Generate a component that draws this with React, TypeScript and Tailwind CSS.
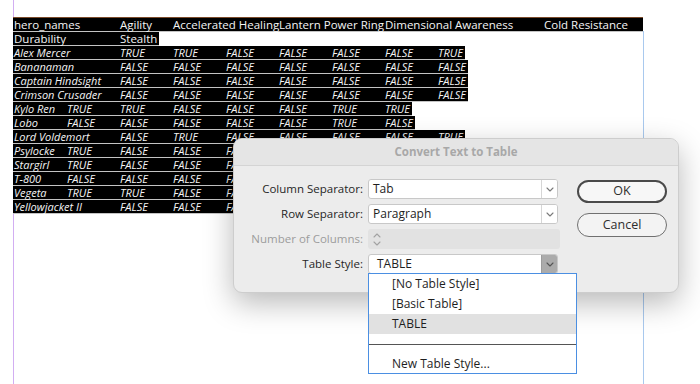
import React from "react";

type Row = [string, boolean, string[], boolean];

const T = "TRUE";
const F = "FALSE";

const rows: Row[] = [
  ["Alex Mercer", true, [T, T, F, F, F, F, T], false],
  ["Bananaman", true, [F, F, F, F, F, F, F], false],
  ["Captain Hindsight", true, [F, F, F, F, F, F, F], false],
  ["Crimson Crusader", true, [F, F, F, F, F, F, F], false],
  ["Kylo Ren", false, [T, T, F, F, F, T, T], false],
  ["Lobo", false, [F, F, F, F, F, T, F], false],
  ["Lord Voldemort", true, [F, T, F, F, F, F, T], false],
  ["Psylocke", false, [T, F, F, F], true],
  ["Stargirl", false, [T, F, F, F], true],
  ["T-800", false, [F, F, F, F], true],
  ["Vegeta", false, [T, T, F, F], true],
  ["Yellowjacket II", true, [F, F, F], true],
];

const tableFont = { fontFamily: '"Open Sans", "Noto Sans", sans-serif' };

function Chevron({ color = "#7a7a7a" }: { color?: string }) {
  return (
    <svg width="8" height="5" viewBox="0 0 8 5">
      <polyline points="1,1 4,4 7,1" fill="none" stroke={color} strokeWidth="1.1" strokeLinecap="round" strokeLinejoin="round" />
    </svg>
  );
}

function Select({ value, pressed = false, textPad = "pl-[4px]" }: { value: string; pressed?: boolean; textPad?: string }) {
  return (
    <div className="ml-[5px] flex h-[20px] w-[190px] overflow-hidden rounded-[3px] border border-[#c8c8c8] bg-white">
      <div className={"flex flex-1 items-center text-[12px] text-[#1e1e1e] " + textPad}>{value}</div>
      <div
        className={
          pressed
            ? "flex w-[16px] items-center justify-center border-l border-[#9c9c9c] bg-[#ababab]"
            : "flex w-[16px] items-center justify-center border-l border-[#d6d6d6] bg-white"
        }
      >
        <Chevron color={pressed ? "#555" : "#7a7a7a"} />
      </div>
    </div>
  );
}

export default function App() {
  return (
    <div className="relative h-[384px] w-[700px] overflow-hidden bg-white">
      {/* guides */}
      <div className="absolute left-[13px] top-0 h-[384px] w-[1px] bg-[#d2aef2]" />
      <div className="absolute left-[643px] top-[31px] h-[353px] w-[1px] bg-[#a9c9ee]" />

      {/* text frame */}
      <div className="absolute left-[13px] top-[17px] w-[630px]" style={tableFont}>
        <div className="flex h-[15px] items-center border-t border-b border-t-[#7b4a2a] border-b-[#c4c4c4] bg-black pl-[1px] text-[11.5px] font-medium leading-[13px] text-[#f4f4f4]">
          <span className="w-[106px] shrink-0">hero_names</span>
          <span className="w-[53px] shrink-0">Agility</span>
          <span className="w-[106px] shrink-0 whitespace-nowrap">Accelerated Healing</span>
          <span className="w-[106px] shrink-0 whitespace-nowrap">Lantern Power Ring</span>
          <span className="w-[159px] shrink-0 whitespace-nowrap">Dimensional Awareness</span>
          <span className="shrink-0 whitespace-nowrap">Cold Resistance</span>
        </div>
        <div className="flex">
          <div className="flex h-[14px] items-center border-b border-[#c4c4c4] bg-black pl-[1px] pr-[2px] text-[11.5px] font-medium leading-[13px] text-[#f4f4f4]">
            <span className="w-[106px] shrink-0">Durability</span>
            <span className="shrink-0">Stealth</span>
          </div>
        </div>
        {rows.map(([name, wide, vals, hidden]) => (
          <div key={name} className="flex">
            <div
              className={
                hidden
                  ? "flex h-[14px] w-[455px] items-center border-b border-[#c4c4c4] bg-black pl-[1px] text-[11px] italic leading-[13px] text-[#f4f4f4]"
                  : "flex h-[14px] items-center border-b border-[#c4c4c4] bg-black pl-[1px] pr-[2px] text-[11px] italic leading-[13px] text-[#f4f4f4]"
              }
            >
              <span className={wide ? "w-[106px] shrink-0 whitespace-nowrap" : "w-[53px] shrink-0 whitespace-nowrap"}>{name}</span>
              {vals.map((v, i) => (
                <span key={i} className={i < vals.length - 1 ? "w-[53px] shrink-0" : "shrink-0"}>
                  {v}
                </span>
              ))}
            </div>
          </div>
        ))}
      </div>

      {/* dialog */}
      <div
        className="absolute left-[233px] top-[138px] h-[155px] w-[446px] overflow-hidden rounded-[9px] border border-[#cdcdcd] bg-[#ececec] shadow-[0_10px_30px_rgba(0,0,0,0.28)]"
        style={tableFont}
      >
        <div className="flex h-[27px] items-center justify-center border-b border-[#d4d4d4] bg-[#e5e5e5] text-[11.5px] font-bold text-[#a8a8a8]">
          Convert Text to Table
        </div>
        <div className="flex pt-[13px]">
          <div className="flex flex-col gap-[5px] text-[11.5px] text-[#262626]">
            <div className="flex h-[20px] items-center">
              <div className="w-[129px] text-right">Column Separator:</div>
              <Select value="Tab" />
            </div>
            <div className="flex h-[20px] items-center">
              <div className="w-[129px] text-right">Row Separator:</div>
              <Select value="Paragraph" />
            </div>
            <div className="flex h-[20px] items-center">
              <div className="w-[129px] text-right text-[#9c9c9c]">Number of Columns:</div>
              <div className="ml-[5px] flex h-[20px] w-[192px] items-center rounded-[3px] bg-[#e2e2e2]">
                <div className="flex h-[20px] w-[17px] flex-col items-center justify-center gap-[3px]">
                  <svg width="8" height="5" viewBox="0 0 8 5">
                    <polyline points="1,4 4,1 7,4" fill="none" stroke="#a2a2a2" strokeWidth="1.1" strokeLinecap="round" strokeLinejoin="round" />
                  </svg>
                  <Chevron color="#a2a2a2" />
                </div>
              </div>
            </div>
            <div className="flex h-[20px] items-center">
              <div className="w-[129px] text-right">Table Style:</div>
              <Select value="TABLE" pressed textPad="pl-[8px]" />
            </div>
          </div>
          <div className="ml-[17px] flex flex-col gap-[10px] pt-[1px]">
            <div className="flex h-[23px] w-[90px] items-center justify-center rounded-full border-2 border-[#4a4a4a] bg-[#f7f7f7] text-[12.5px] text-[#2e2e2e]">
              OK
            </div>
            <div className="flex h-[24px] w-[90px] items-center justify-center rounded-full border border-[#707070] bg-[#f3f3f3] text-[12.5px] text-[#2e2e2e]">
              Cancel
            </div>
          </div>
        </div>
      </div>

      {/* dropdown menu */}
      <div
        className="absolute left-[368px] top-[273px] h-[101px] w-[209px] border-[1.5px] border-[#4b8fe2] bg-white text-[12px] text-[#1e1e1e]"
        style={tableFont}
      >
        <div className="flex h-[20px] items-center pl-[23px]">[No Table Style]</div>
        <div className="flex h-[20px] items-center pl-[23px]">[Basic Table]</div>
        <div className="flex h-[20px] items-center bg-[#e1e1e1] pl-[23px]">TABLE</div>
        <div className="flex h-[20px] items-center">
          <div className="h-[1px] w-full bg-[#555]" />
        </div>
        <div className="flex h-[20px] items-center pl-[23px]">New Table Style...</div>
      </div>
    </div>
  );
}
